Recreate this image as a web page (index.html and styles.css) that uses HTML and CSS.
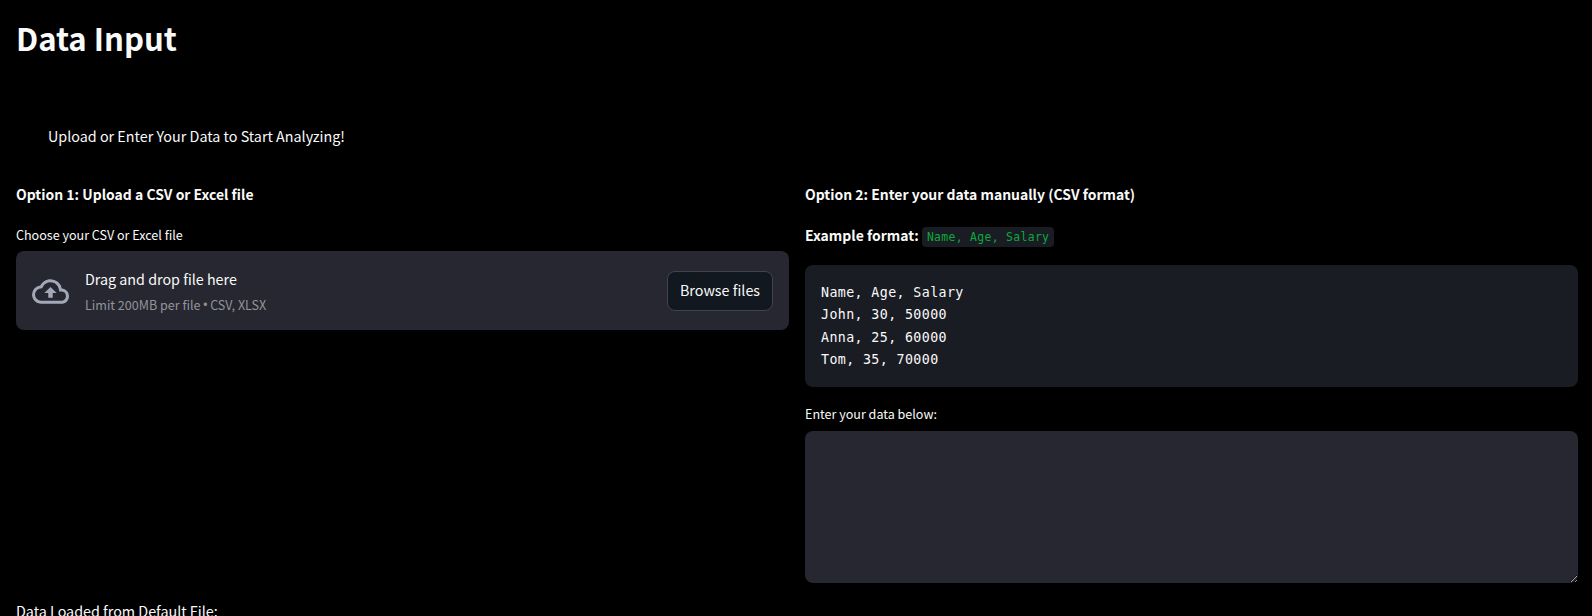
FILE: index.html
```html
<!DOCTYPE html>
<html lang="en">
<head>
<meta charset="utf-8">
<title>Data Input</title>
<link rel="stylesheet" href="styles.css">
</head>
<body>
<main class="page">
  <h1 class="title">Data Input</h1>
  <p class="intro">Upload or Enter Your Data to Start Analyzing!</p>
  <div class="columns">
    <section class="column">
      <p class="option">Option 1: Upload a CSV or Excel file</p>
      <label class="label">Choose your CSV or Excel file</label>
      <div class="dropzone">
        <svg class="cloud" viewBox="0 0 24 24" width="37" height="37"><path fill="currentColor" d="M19.35 10.04A7.49 7.49 0 0 0 12 4C9.11 4 6.6 5.64 5.35 8.04A5.994 5.994 0 0 0 0 14c0 3.31 2.69 6 6 6h13c2.76 0 5-2.24 5-5 0-2.64-2.05-4.78-4.65-4.96zM19 18H6c-2.21 0-4-1.79-4-4 0-2.05 1.53-3.76 3.56-3.97l1.07-.11.5-.95A5.469 5.469 0 0 1 12 6c2.62 0 4.88 1.86 5.39 4.43l.3 1.5 1.53.11A2.98 2.98 0 0 1 22 15c0 1.65-1.35 3-3 3zM8 13h2.55v3h2.9v-3H16l-4-4z"/></svg>
        <div class="instructions">
          <span class="drag">Drag and drop file here</span>
          <span class="limit">Limit 200MB per file <span class="dot">•</span> CSV, XLSX</span>
        </div>
        <button class="browse" type="button">Browse files</button>
      </div>
    </section>
    <section class="column">
      <p class="option">Option 2: Enter your data manually (CSV format)</p>
      <p class="example">Example format: <code class="chip">Name, Age, Salary</code></p>
      <pre class="sample">Name, Age, Salary
John, 30, 50000
Anna, 25, 60000
Tom, 35, 70000</pre>
      <label class="label enter" for="manual">Enter your data below:</label>
      <textarea class="manual" id="manual"></textarea>
    </section>
  </div>
  <p class="loaded">Data Loaded from Default File:</p>
</main>
</body>
</html>
```
FILE: styles.css
```css
* { box-sizing: border-box; }
body {
  margin: 0;
  height: 616px;
  overflow: hidden;
  background: #000;
  color: #fafafa;
  font-family: "Source Sans Pro", "Noto Sans CJK SC", sans-serif;
  font-size: 14.33px;
  line-height: 24px;
}
p, h1, pre { margin: 0; }
.page { padding: 14px 14px 0 16px; }
.title { font-size: 31.1px; line-height: 48px; font-weight: 700; }
.intro { padding: 62px 32px 0; }
.columns { display: grid; grid-template-columns: 1fr 1fr; gap: 16px; margin-top: 34px; }
.column { display: flex; flex-direction: column; min-width: 0; }
.option, .example { font-size: 13.96px; font-weight: 700; }
.option { margin-bottom: 16px; }
.label { font-size: 12.55px; line-height: 24px; height: 28px; margin-top: 1px; }
.label.enter { margin: 15px 0 1px; }
.dropzone {
  display: flex;
  align-items: center;
  height: 79px;
  padding: 0 16px;
  border-radius: 8px;
  background: #262730;
}
.cloud { color: #a3a8b8; margin: 2px 16px 0 0; flex: none; }
.instructions { display: flex; flex-direction: column; flex: 1; padding-top: 3px; }
.drag { font-size: 14.3px; }
.limit { font-size: 12.55px; line-height: 27px; color: #93949a; }
.dot { font-family: "Open Sans", sans-serif; font-size: 15px; line-height: 1; margin: 0 -0.8px; }
.browse {
  width: 106px;
  height: 40px;
  padding: 0 0 2px;
  border: 1px solid #41444c;
  border-radius: 8px;
  background: #11181f;
  color: #fafafa;
  font: inherit;
}
.example { height: 26px; margin: 1px 0 16px; }
.chip {
  display: inline-block;
  height: 20px;
  line-height: 21px;
  padding: 0 5px;
  border-radius: 4px;
  background: #1a1c24;
  color: #09ab3b;
  font-family: "DejaVu Sans Mono", monospace;
  font-size: 11.4px;
  letter-spacing: 0.34px;
  font-weight: 400;
}
.sample {
  height: 122px;
  padding: 17px 16px 15px;
  border-radius: 8px;
  background: #1a1c24;
  font-family: "DejaVu Sans Mono", monospace;
  font-size: 13.3px;
  letter-spacing: 0.39px;
  line-height: 22.4px;
}
.manual {
  display: block;
  height: 152px;
  border: 0;
  border-radius: 8px;
  background: #262730;
  color: #fafafa;
  resize: vertical;
}
.loaded { margin-top: 16px; }
```
